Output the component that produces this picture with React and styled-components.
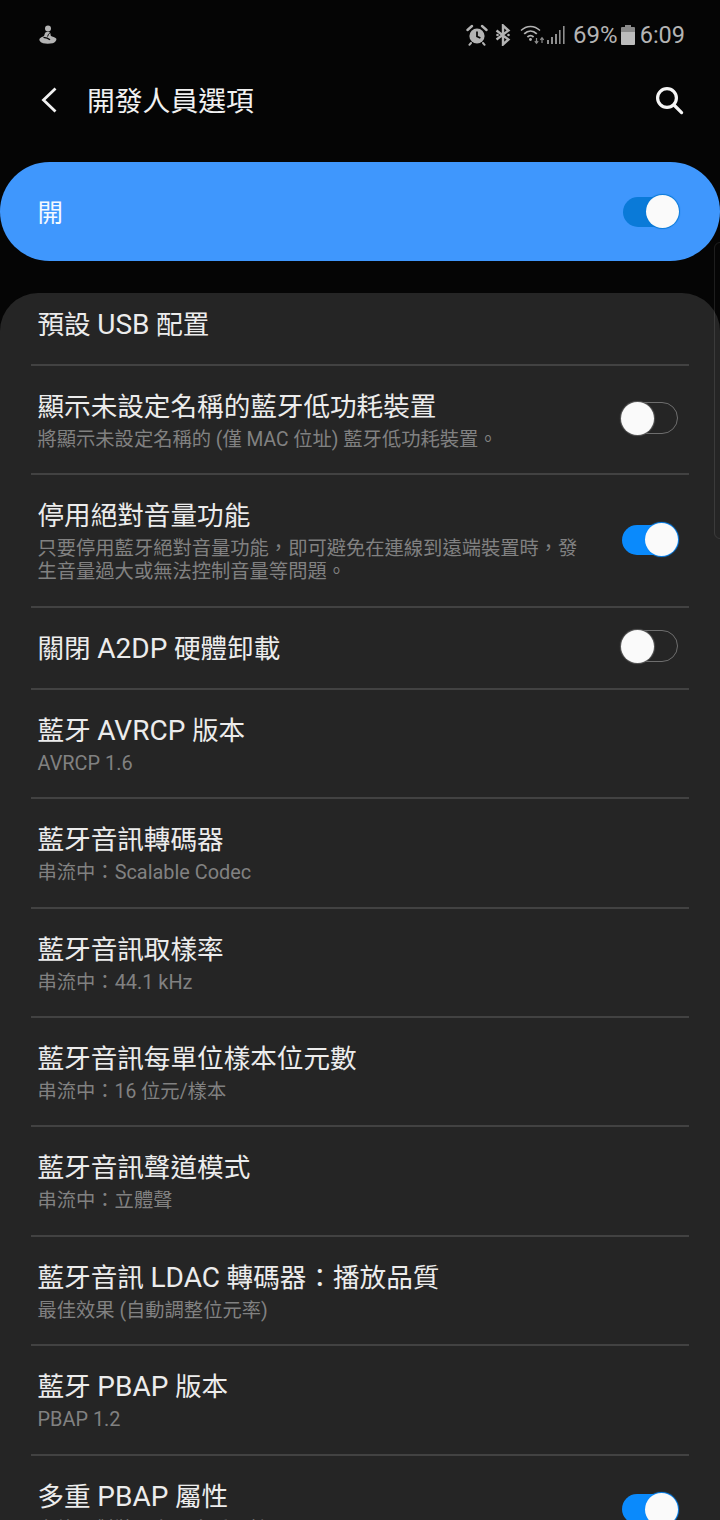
import React from "react";
import styled, { createGlobalStyle } from "styled-components";

const GlobalStyle = createGlobalStyle`
  html, body {
    margin: 0;
    padding: 0;
    background: #050505;
  }
  body {
    font-family: Roboto, "Noto Sans CJK TC", sans-serif;
  }
`;

const PAGE = styled.div`
  position: relative;
  width: 720px;
  height: 1520px;
  overflow: hidden;
  background: #050505;
`;

const STATUSBAR = styled.div`
  height: 70px;
  display: flex;
  align-items: center;
  justify-content: space-between;
  padding: 0 35px 0 38px;
  box-sizing: border-box;
  color: #b4b4b4;
`;

const STATUSRIGHT = styled.div`
  display: flex;
  align-items: center;
`;

const STATUSTEXT = styled.span`
  font-size: ${(p) => p.$size || 23.5}px;
  line-height: 30px;
  margin-left: ${(p) => p.$gap}px;
`;

const SPACER = styled.span`
  width: ${(p) => p.$w}px;
`;

const TOPBAR = styled.div`
  height: 60px;
  display: flex;
  align-items: center;
  justify-content: space-between;
  padding: 0 36px 0 40px;
`;

const TOPLEFT = styled.div`
  display: flex;
  align-items: center;
  gap: 29px;
`;

const TITLE = styled.h1`
  margin: 4px 0 0;
  font-size: 27.8px;
  line-height: 40px;
  font-weight: 400;
  color: #f1f1f1;
`;

const BANNER = styled.div`
  height: 99px;
  margin-top: 32px;
  border-radius: 50px;
  background: #3f97fd;
  display: flex;
  align-items: center;
  justify-content: space-between;
  padding: 0 41px 0 37.5px;
  box-sizing: border-box;
  color: #f4f9ff;
  font-size: 25.5px;
  line-height: 36px;
`;

const BANNERLABEL = styled.span`
  margin-top: 2px;
`;

const PANEL = styled.div`
  margin-top: 32px;
  padding: 13px 31px 0;
  background: #252525;
  border-radius: 38px 38px 0 0;
`;

const ROW = styled.div`
  display: flex;
  align-items: center;
  justify-content: space-between;
  padding: 22px 11px 22px 6.5px;
  border-bottom: 2px solid #424242;

  &:first-child {
    padding-top: 0;
  }
`;

const ROWTEXT = styled.div`
  width: 548px;
`;

const ROWTITLE = styled.div`
  padding-top: 1px;
  margin-bottom: -1px;
  font-size: 26.6px;
  line-height: 36px;
  color: #ececec;
`;

const ROWSUB = styled.div`
  margin-top: 4px;
  margin-bottom: 0.4px;
  font-size: 19.3px;
  line-height: 23px;
  color: #818181;
`;

const LATIN = styled.span`
  font-size: ${(p) => p.$size}px;
`;

const TRACK = styled.div`
  position: relative;
  width: 56px;
  height: ${(p) => (p.$on ? 30 : 32)}px;
  box-sizing: border-box;
  border-radius: 16px;
  flex-shrink: 0;
  margin-top: ${(p) => (p.$on ? p.$lift || 0 : -3)}px;
  border: ${(p) => (p.$on ? "none" : "1.5px solid #6e6e6e")};
  background: ${(p) => (p.$on ? p.$color || "#0a8afc" : "transparent")};
`;

const KNOB = styled.span`
  position: absolute;
  top: 50%;
  width: 33px;
  height: 33px;
  margin-top: -16.5px;
  border-radius: 50%;
  background: #fafafa;
  box-shadow: 0 0 1px 1px ${(p) => (p.$on ? p.$ring || "#0a8afc" : "#5c5c5c")};
  ${(p) => (p.$on ? "right: 0;" : "left: -2px;")}
`;

const SCROLLBAR = styled.div`
  position: absolute;
  left: 714px;
  top: 242px;
  width: 12px;
  height: 297px;
  box-sizing: border-box;
  border: 1.5px solid rgba(255, 255, 255, 0.1);
  border-radius: 8px;
`;

const Toggle = ({ on, color, ring, lift }) => (
  <TRACK $on={on} $color={color} $lift={lift}>
    <KNOB $on={on} $ring={ring} />
  </TRACK>
);

// the latin runs sit a little larger than the CJK ones in the reference
const Mixed = ({ text, size }) =>
  text.split(/([A-Za-z0-9.]{3,}(?: [A-Za-z0-9.]+)*)/).map((part, i) =>
    i % 2 ? (
      <LATIN key={i} $size={size}>
        {part}
      </LATIN>
    ) : (
      part
    )
  );

const PersonIcon = () => (
  <svg width="20" height="20" viewBox="0 0 20 20" fill="#b4b4b4">
    <circle cx="10" cy="3.6" r="3" />
    <path d="M7.4 7.4c2-1.100 4.400-.7 5 1 .3.9.1 1.900.6 2.500 1 .5 4.400 1.100 5.200 2.600.8 1.700-1.200 4.200-3.600 4.700-2.600.6-6.800.7-9.600 0C2.700 17.600.7 15.500 1.600 13.800c.7-1.300 2.700-1.800 4-2.500.900-.600.800-2.800 1.800-3.900z" />
    <path d="M5.500 12.400c2.600.1 5 1 6.500 2.400" stroke="#050505" strokeWidth="1.300" fill="none" />
    <path d="M11.600 8.200c-1 .8-1.800 2-2 3.400" stroke="#050505" strokeWidth="1" fill="none" />
  </svg>
);

const AlarmIcon = () => (
  <svg width="22" height="22" viewBox="0 0 22 22">
    <circle cx="11" cy="12" r="7.6" fill="#b4b4b4" />
    <path d="M11 7.500v5l3.400 1.600" stroke="#050505" strokeWidth="1.700" fill="none" />
    <path d="M1.500 6 6 2M20.500 6 16 2" stroke="#b4b4b4" strokeWidth="2.400" strokeLinecap="round" fill="none" />
    <path d="M5 19l-1.600 1.800M17 19l1.600 1.800" stroke="#b4b4b4" strokeWidth="2" strokeLinecap="round" fill="none" />
  </svg>
);

const BluetoothIcon = () => (
  <svg width="18" height="22" viewBox="0 0 18 22" fill="none" stroke="#b4b4b4" strokeWidth="2.400">
    <path d="M2.500 6.500l12 9L9 20.500v-19l5.500 5-12 9" />
    <circle cx="3.500" cy="11" r="1.300" fill="#b4b4b4" stroke="none" />
    <circle cx="14.500" cy="11" r="1.300" fill="#b4b4b4" stroke="none" />
  </svg>
);

const WifiIcon = () => (
  <svg width="26" height="22" viewBox="0 0 26 22" fill="none" stroke="#b4b4b4">
    <path d="M1 6.500c5.500-5.400 13.500-5.400 19 0" strokeWidth="1.400" />
    <path d="M4.200 9.800c3.800-3.600 8.800-3.600 12.600 0" strokeWidth="1.800" />
    <path d="M7.400 13c2-1.800 4.200-1.800 6.200 0" strokeWidth="1.800" />
    <circle cx="10.500" cy="15.500" r="1.400" fill="#b4b4b4" stroke="none" />
    <path d="M16.500 14v5M14.800 17.200l1.700 2 1.700-2" strokeWidth="1.200" stroke="#8c8c8c" />
    <path d="M22 19v-5M20.300 15.800l1.700-2 1.700 2" strokeWidth="1.200" stroke="#8c8c8c" />
  </svg>
);

const SignalIcon = () => (
  <svg width="18" height="20" viewBox="0 0 18 20" fill="#8f8f8f">
    <rect x="0" y="15" width="2" height="4" />
    <rect x="4" y="12" width="2" height="7" />
    <rect x="8" y="9" width="2" height="10" />
    <rect x="12" y="5" width="1.600" height="14" />
    <rect x="16" y="1" width="1.600" height="18" />
  </svg>
);

const BatteryIcon = () => (
  <svg width="14" height="20" viewBox="0 0 14 20">
    <path d="M4 0h6v2h3a1 1 0 0 1 1 1v4H0V3a1 1 0 0 1 1-1h3z" fill="#8a8a8a" />
    <path d="M0 7h14v12a1 1 0 0 1-1 1H1a1 1 0 0 1-1-1z" fill="#bcbcbc" />
  </svg>
);

const BackIcon = () => (
  <svg width="18" height="28" viewBox="0 0 18 28" fill="none" stroke="#f1f1f1" strokeWidth="2.800">
    <path d="M15.500 2.500 3.500 14l12 11.500" />
  </svg>
);

const SearchIcon = () => (
  <svg width="30" height="30" viewBox="0 0 30 30" fill="none" stroke="#f5f5f5" strokeWidth="3.200">
    <circle cx="13" cy="13" r="9.400" />
    <path d="M20 20l7.600 7.600" strokeLinecap="round" />
  </svg>
);

const items = [
  { title: "預設 USB 配置" },
  {
    title: "顯示未設定名稱的藍牙低功耗裝置",
    sub: "將顯示未設定名稱的 (僅 MAC 位址) 藍牙低功耗裝置。",
    plainSub: true,
    toggle: false,
  },
  {
    title: "停用絕對音量功能",
    sub: "只要停用藍牙絕對音量功能，即可避免在連線到遠端裝置時，發生音量過大或無法控制音量等問題。",
    toggle: true,
    lift: -2,
  },
  { title: "關閉 A2DP 硬體卸載", toggle: false },
  { title: "藍牙 AVRCP 版本", sub: "AVRCP 1.6" },
  { title: "藍牙音訊轉碼器", sub: "串流中：Scalable Codec" },
  { title: "藍牙音訊取樣率", sub: "串流中：44.1 kHz" },
  { title: "藍牙音訊每單位樣本位元數", sub: "串流中：16 位元/樣本" },
  { title: "藍牙音訊聲道模式", sub: "串流中：立體聲" },
  { title: "藍牙音訊 LDAC 轉碼器：播放品質", sub: "最佳效果 (自動調整位元率)" },
  { title: "藍牙 PBAP 版本", sub: "PBAP 1.2" },
  { title: "多重 PBAP 屬性", sub: "允許配對裝置存取多重屬性", toggle: true },
];

const App = () => {
  return (
    <PAGE>
      <GlobalStyle />
      <STATUSBAR>
        <PersonIcon />
        <STATUSRIGHT>
          <AlarmIcon />
          <SPACER $w={6} />
          <BluetoothIcon />
          <SPACER $w={8} />
          <WifiIcon />
          <SPACER $w={1} />
          <SignalIcon />
          <STATUSTEXT $gap={8} $size={24}>69%</STATUSTEXT>
          <SPACER $w={3} />
          <BatteryIcon />
          <STATUSTEXT $gap={5}>6:09</STATUSTEXT>
        </STATUSRIGHT>
      </STATUSBAR>
      <TOPBAR>
        <TOPLEFT>
          <BackIcon />
          <TITLE>開發人員選項</TITLE>
        </TOPLEFT>
        <SearchIcon />
      </TOPBAR>
      <BANNER>
        <BANNERLABEL>開</BANNERLABEL>
        <Toggle on color="#0a7ad8" ring="#0a7ad8" />
      </BANNER>
      <PANEL>
        {items.map((item) => (
          <ROW key={item.title}>
            <ROWTEXT>
              <ROWTITLE>
                <Mixed text={item.title} size={28} />
              </ROWTITLE>
              {item.sub && (
                <ROWSUB>
                  {item.plainSub ? item.sub : <Mixed text={item.sub} size={19.9} />}
                </ROWSUB>
              )}
            </ROWTEXT>
            {item.toggle !== undefined && <Toggle on={item.toggle} lift={item.lift} />}
          </ROW>
        ))}
      </PANEL>
      <SCROLLBAR />
    </PAGE>
  );
};

export default App;
